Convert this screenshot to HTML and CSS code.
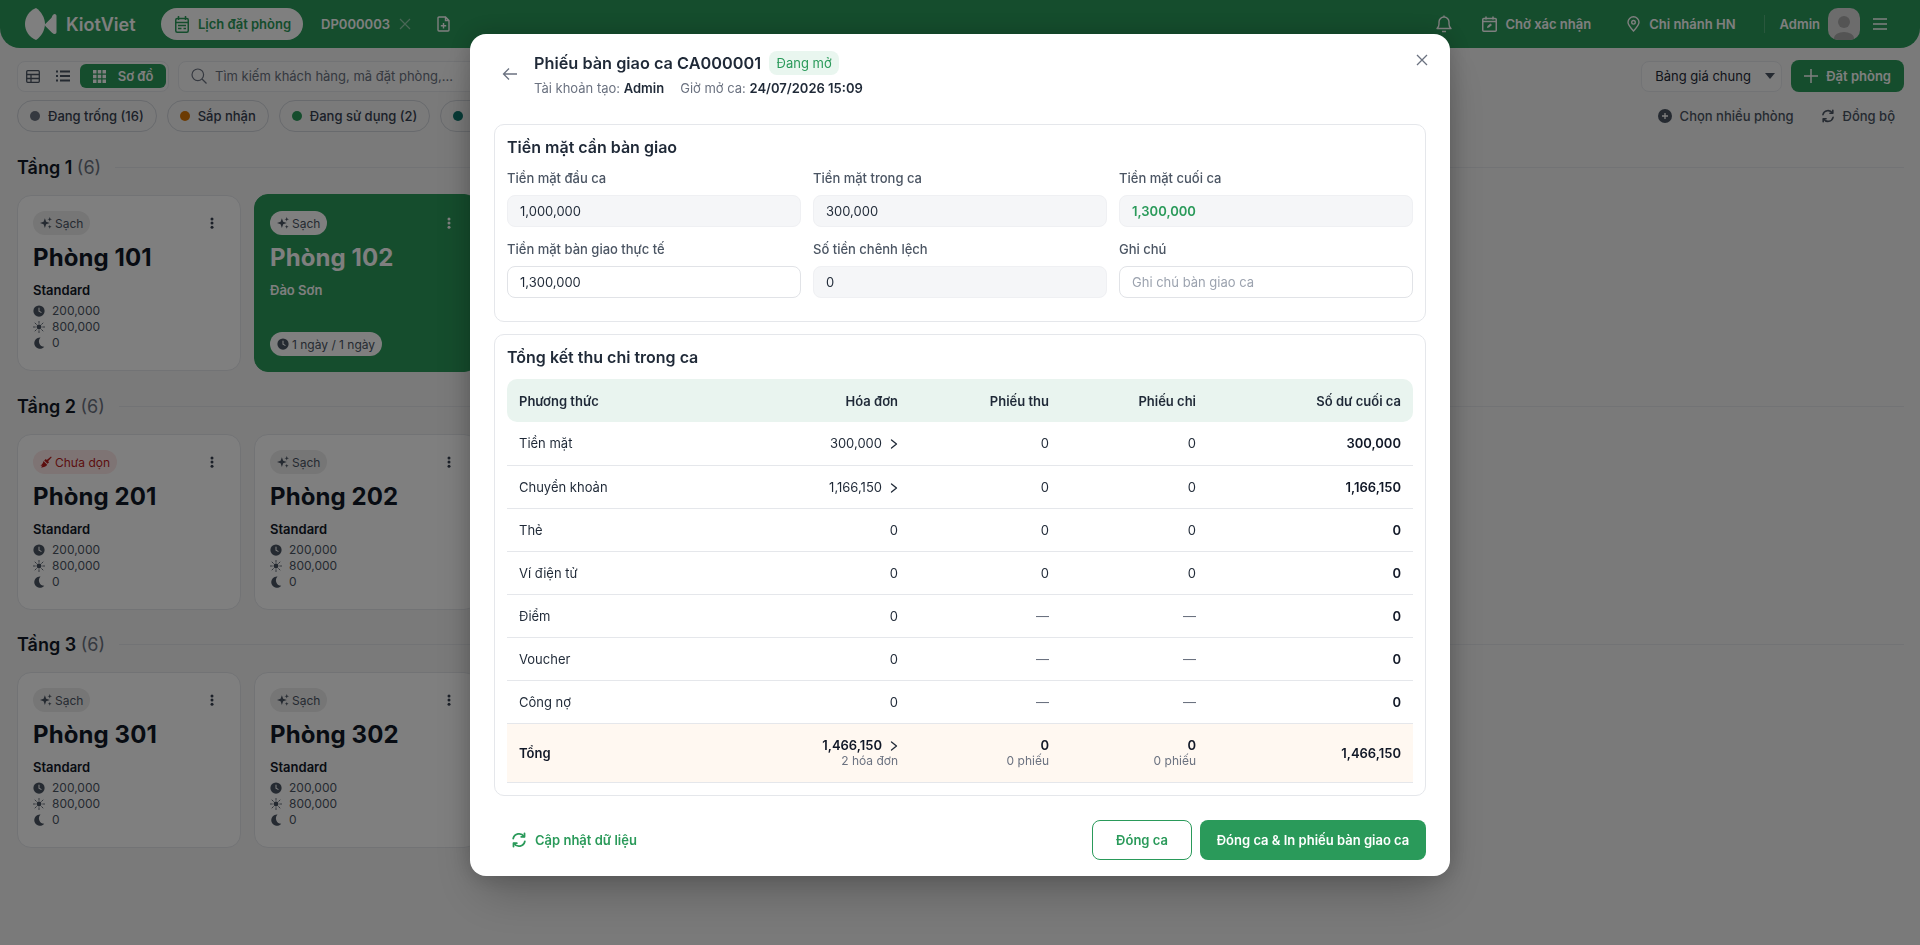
FILE: index.html
```html
<!DOCTYPE html>
<html lang="vi">
<head>
    <meta charset="UTF-8">
    <meta name="viewport" content="width=device-width, initial-scale=1.0">
    <title>Phiếu bàn giao ca</title>
    <link rel="stylesheet" href="styles.css">
</head>
<body>

    <!-- Shared icons -->
    <svg class="sprite" aria-hidden="true">
        <symbol id="i-spark" viewBox="0 0 16 16"><path fill="currentColor" d="M6.500 1.500l1.700 4.800L13 8 8.200 9.700 6.500 14.500 4.800 9.700 0 8l4.800-1.700zM13 0l.8 2.200 2.200.8-2.200.8L13 6l-.8-2.200L10 3l2.200-.8zM13 10.500l.7 1.800 1.800.7-1.800.7L13 15.500l-.7-1.800-1.800-.7 1.800-.7z"/></symbol>
        <symbol id="i-dots" viewBox="0 0 16 16"><g fill="currentColor"><circle cx="8" cy="2.500" r="2"/><circle cx="8" cy="8" r="2"/><circle cx="8" cy="13.500" r="2"/></g></symbol>
        <symbol id="i-clock" viewBox="0 0 16 16"><circle cx="8" cy="8" r="7.500" fill="currentColor"/><path d="M8 4v4.300l2.800 1.500" fill="none" stroke="#fff" stroke-width="1.400" stroke-linecap="round"/></symbol>
        <symbol id="i-sun" viewBox="0 0 16 16"><circle cx="8" cy="8" r="3.200" fill="currentColor"/><path d="M8 .5v2.500M8 13v2.500M.5 8H3M13 8h2.500M2.700 2.700l1.800 1.800M11.500 11.500l1.800 1.800M13.300 2.700l-1.800 1.800M4.500 11.500l-1.800 1.800" stroke="currentColor" stroke-width="1.100" stroke-linecap="round"/></symbol>
        <symbol id="i-moon" viewBox="0 0 16 16"><path fill="currentColor" d="M10 .8a7.500 7.500 0 1 0 5 12.200A7.200 7.200 0 0 1 10 .8z"/></symbol>
        <symbol id="i-sync" viewBox="0 0 16 16"><g fill="none" stroke="currentColor" stroke-width="1.800" stroke-linecap="round" stroke-linejoin="round"><path d="M2.200 6.500A6 6 0 0 1 13 4.500"/><path d="M13.800 9.500A6 6 0 0 1 3 11.500"/><path d="M13.500 1.500v3.300h-3.300"/><path d="M2.500 14.500v-3.300h3.300"/></g></symbol>
        <symbol id="i-chev" viewBox="0 0 8 12"><path d="M1.500 2l5 4-5 4" fill="none" stroke="currentColor" stroke-width="1.300" stroke-linecap="round" stroke-linejoin="round"/></symbol>
    </svg>

    <header class="topbar">
        <div class="brand">
            <svg class="brand-logo" viewBox="0 0 32 32"><path fill="currentColor" d="M11 0c5 3 9 10 9 16s-4 13-9 16C4 29 0 23 0 16S4 3 11 0z"/><path fill="currentColor" d="M29.500 6c1.500 0 2 1 2 2v16c0 1-.5 2-2 2-.8 0-1.800-.6-3-1.800l-6-6c-.8-.8-.8-1.600 0-2.400l6-6C27.700 6.600 28.700 6 29.500 6z"/></svg>
            <span>KiotViet</span>
        </div>
        <a class="tab tab-active">
            <svg width="14" height="17" viewBox="0 0 14 17" fill="none" stroke="currentColor" stroke-width="1.500"><rect x=".75" y="2.500" width="12.500" height="13.700" rx="1.500"/><path d="M3.500 0v4M10.500 0v4M.75 6.500h12.500M3 9.500h8M3 12.500h3.500M8.500 12.500H11"/></svg>
            Lịch đặt phòng
        </a>
        <a class="tab">DP000003</a>
        <svg class="tab-close" width="12" height="12" viewBox="0 0 12 12" stroke="currentColor" stroke-width="1.200"><path d="M1 1l10 10M11 1L1 11"/></svg>
        <svg class="tab-new" width="13" height="16" viewBox="0 0 13 16" fill="none" stroke="currentColor" stroke-width="1.400"><path d="M1 2a1 1 0 0 1 1-1h6.500L12 4.500V14a1 1 0 0 1-1 1H2a1 1 0 0 1-1-1zM8.500 1v3.500H12M6.500 7v5.500M3.800 9.700h5.400"/></svg>

        <div class="topbar-right">
            <svg class="bell" width="16" height="18" viewBox="0 0 16 18" fill="none" stroke="currentColor" stroke-width="1.400" stroke-linejoin="round"><path d="M1 13.500c1.300-1 2-2.200 2-4.500V7a5 5 0 0 1 10 0v2c0 2.300.7 3.500 2 4.500zM6 16.500h4M8 .5v1.500"/></svg>
            <a class="top-link">
                <svg width="15" height="16" viewBox="0 0 15 16" fill="none" stroke="currentColor" stroke-width="1.500"><rect x=".75" y="2.500" width="13.500" height="12.700" rx="1"/><path d="M4 .5v3M11 .5v3M.75 5.500h13.500"/><path d="M5 12l.5-2 3-2.500 1.500 1.500-3 2.500z" fill="currentColor" stroke="none"/></svg>
                Chờ xác nhận
            </a>
            <a class="top-link">
                <svg width="13" height="16" viewBox="0 0 13 16" fill="none" stroke="currentColor" stroke-width="1.400"><path d="M6.500 15C3.500 11.800 1 9 1 6.300a5.500 5.500 0 0 1 11 0C12 9 9.500 11.800 6.500 15z"/><circle cx="6.500" cy="6.300" r="1.800"/></svg>
                Chi nhánh HN
            </a>
            <span class="top-divider"></span>
            <span class="admin">Admin</span>
            <span class="avatar"><svg width="32" height="32" viewBox="0 0 32 32" fill="#a8a8a8"><circle cx="16" cy="14" r="6"/><ellipse cx="16" cy="30" rx="10" ry="6"/></svg></span>
            <svg class="menu" width="14" height="12" viewBox="0 0 14 12" stroke="currentColor" stroke-width="1.300"><path d="M0 1h14M0 6h14M0 11h14"/></svg>
        </div>
    </header>

    <main class="page">
        <div class="toolbar">
            <div class="view-toggle">
                <button class="view-btn"><svg width="14" height="13" viewBox="0 0 14 13" fill="none" stroke="currentColor" stroke-width="1.300"><rect x=".7" y=".7" width="12.600" height="11.600" rx="1"/><path d="M.7 4.500h12.600M.7 8.500h12.600M5 4.500v8"/></svg></button>
                <button class="view-btn"><svg width="14" height="12" viewBox="0 0 14 12" stroke="currentColor" stroke-width="2"><path d="M4 1.500h10M4 6h10M4 10.500h10M0 1.500h2M0 6h2M0 10.500h2"/></svg></button>
                <button class="view-btn view-on"><svg width="13" height="13" viewBox="0 0 13 13" fill="currentColor"><path d="M0 0h3.500v3.500H0zM4.750 0h3.500v3.500h-3.500zM9.500 0H13v3.500H9.500zM0 4.750h3.500v3.500H0zM4.750 4.750h3.500v3.500h-3.500zM9.500 4.750H13v3.500H9.500zM0 9.500h3.500V13H0zM4.750 9.500h3.500V13h-3.500zM9.500 9.500H13V13H9.500z"/></svg>Sơ đồ</button>
            </div>
            <div class="search">
                <svg width="16" height="16" viewBox="0 0 16 16" fill="none" stroke="currentColor" stroke-width="1.200"><circle cx="6.800" cy="6.800" r="5.800"/><path d="M11 11l4.500 4.500"/></svg>
                <span>Tìm kiếm khách hàng, mã đặt phòng,...</span>
            </div>
            <div class="toolbar-right">
                <div class="price-select">Bảng giá chung<i class="caret"></i></div>
                <button class="btn-book"><svg width="14" height="14" viewBox="0 0 14 14" stroke="currentColor" stroke-width="1.500"><path d="M7 0v14M0 7h14"/></svg>Đặt phòng</button>
            </div>
        </div>

        <div class="filters">
            <span class="chip"><i class="dot dot-grey"></i>Đang trống (16)</span>
            <span class="chip"><i class="dot dot-orange"></i>Sắp nhận</span>
            <span class="chip"><i class="dot dot-green"></i>Đang sử dụng (2)</span>
            <span class="chip"><i class="dot dot-teal"></i>Sắp trả</span>
            <div class="filter-actions">
                <a class="action"><svg width="14" height="14" viewBox="0 0 14 14"><circle cx="7" cy="7" r="7" fill="currentColor"/><path d="M7 4v6M4 7h6" stroke="#fff" stroke-width="1.300"/></svg>Chọn nhiều phòng</a>
                <a class="action"><svg width="14" height="14"><use href="#i-sync"/></svg>Đồng bộ</a>
            </div>
        </div>

        <section class="floor">
            <h2 class="floor-title"><span>Tầng 1 <em>(6)</em></span></h2>
            <div class="rooms">
                <article class="room">
                    <div class="room-top"><span class="status"><svg width="12" height="12"><use href="#i-spark"/></svg>Sạch</span><svg class="room-menu" width="12" height="12"><use href="#i-dots"/></svg></div>
                    <h3>Phòng 101</h3>
                    <div class="room-type">Standard</div>
                    <ul class="prices">
                        <li><svg width="12" height="12"><use href="#i-clock"/></svg>200,000</li>
                        <li><svg width="12" height="12"><use href="#i-sun"/></svg>800,000</li>
                        <li><svg width="12" height="12"><use href="#i-moon"/></svg>0</li>
                    </ul>
                </article>
                <article class="room room-busy">
                    <div class="room-top"><span class="status"><svg width="12" height="12"><use href="#i-spark"/></svg>Sạch</span><svg class="room-menu" width="12" height="12"><use href="#i-dots"/></svg></div>
                    <h3>Phòng 102</h3>
                    <div class="room-type">Đào Sơn</div>
                    <span class="stay"><svg width="12" height="12"><use href="#i-clock"/></svg>1 ngày / 1 ngày</span>
                </article>
            </div>
        </section>

        <section class="floor">
            <h2 class="floor-title"><span>Tầng 2 <em>(6)</em></span></h2>
            <div class="rooms">
                <article class="room">
                    <div class="room-top"><span class="status status-dirty"><svg width="12" height="12" viewBox="0 0 12 12" fill="currentColor"><path d="M11 .5l.7.7-3.600 4 1 1-1.600 1.500L4.200 4.400 5.800 3l1 1zM3.500 5l3.700 3.700C6 10.500 4 11.500 1 11.500l1.500-2-2 .5C2 8.500 3 7 3.500 5z"/></svg>Chưa dọn</span><svg class="room-menu" width="12" height="12"><use href="#i-dots"/></svg></div>
                    <h3>Phòng 201</h3>
                    <div class="room-type">Standard</div>
                    <ul class="prices">
                        <li><svg width="12" height="12"><use href="#i-clock"/></svg>200,000</li>
                        <li><svg width="12" height="12"><use href="#i-sun"/></svg>800,000</li>
                        <li><svg width="12" height="12"><use href="#i-moon"/></svg>0</li>
                    </ul>
                </article>
                <article class="room">
                    <div class="room-top"><span class="status"><svg width="12" height="12"><use href="#i-spark"/></svg>Sạch</span><svg class="room-menu" width="12" height="12"><use href="#i-dots"/></svg></div>
                    <h3>Phòng 202</h3>
                    <div class="room-type">Standard</div>
                    <ul class="prices">
                        <li><svg width="12" height="12"><use href="#i-clock"/></svg>200,000</li>
                        <li><svg width="12" height="12"><use href="#i-sun"/></svg>800,000</li>
                        <li><svg width="12" height="12"><use href="#i-moon"/></svg>0</li>
                    </ul>
                </article>
            </div>
        </section>

        <section class="floor">
            <h2 class="floor-title"><span>Tầng 3 <em>(6)</em></span></h2>
            <div class="rooms">
                <article class="room">
                    <div class="room-top"><span class="status"><svg width="12" height="12"><use href="#i-spark"/></svg>Sạch</span><svg class="room-menu" width="12" height="12"><use href="#i-dots"/></svg></div>
                    <h3>Phòng 301</h3>
                    <div class="room-type">Standard</div>
                    <ul class="prices">
                        <li><svg width="12" height="12"><use href="#i-clock"/></svg>200,000</li>
                        <li><svg width="12" height="12"><use href="#i-sun"/></svg>800,000</li>
                        <li><svg width="12" height="12"><use href="#i-moon"/></svg>0</li>
                    </ul>
                </article>
                <article class="room">
                    <div class="room-top"><span class="status"><svg width="12" height="12"><use href="#i-spark"/></svg>Sạch</span><svg class="room-menu" width="12" height="12"><use href="#i-dots"/></svg></div>
                    <h3>Phòng 302</h3>
                    <div class="room-type">Standard</div>
                    <ul class="prices">
                        <li><svg width="12" height="12"><use href="#i-clock"/></svg>200,000</li>
                        <li><svg width="12" height="12"><use href="#i-sun"/></svg>800,000</li>
                        <li><svg width="12" height="12"><use href="#i-moon"/></svg>0</li>
                    </ul>
                </article>
            </div>
        </section>
    </main>

    <!-- Shift handover modal -->
    <div class="overlay">
        <div class="modal">
            <button class="modal-close"><svg width="12" height="12" viewBox="0 0 12 12" stroke="currentColor" stroke-width="1.300"><path d="M1 1l10 10M11 1L1 11"/></svg></button>

            <div class="modal-head">
                <svg class="back" width="16" height="14" viewBox="0 0 16 14" fill="none" stroke="currentColor" stroke-width="1.300"><path d="M15 7H1.500M7 1.500L1.500 7 7 12.500"/></svg>
                <div>
                    <div class="modal-title">
                        <h1>Phiếu bàn giao ca CA000001</h1>
                        <span class="badge-open">Đang mở</span>
                    </div>
                    <p class="modal-meta">
                        <span>Tài khoản tạo: <b>Admin</b></span>
                        <span>Giờ mở ca: <b>24/07/2026 15:09</b></span>
                    </p>
                </div>
            </div>

            <section class="panel panel-cash">
                <h2>Tiền mặt cần bàn giao</h2>
                <div class="cash-grid">
                    <div class="field">
                        <label for="cash-start">Tiền mặt đầu ca</label>
                        <input id="cash-start" class="readonly" value="1,000,000" readonly>
                    </div>
                    <div class="field">
                        <label for="cash-shift">Tiền mặt trong ca</label>
                        <input id="cash-shift" class="readonly" value="300,000" readonly>
                    </div>
                    <div class="field">
                        <label for="cash-end">Tiền mặt cuối ca</label>
                        <input id="cash-end" class="readonly strong-green" value="1,300,000" readonly>
                    </div>
                    <div class="field">
                        <label for="cash-real">Tiền mặt bàn giao thực tế</label>
                        <input id="cash-real" value="1,300,000">
                    </div>
                    <div class="field">
                        <label for="cash-diff">Số tiền chênh lệch</label>
                        <input id="cash-diff" class="readonly" value="0" readonly>
                    </div>
                    <div class="field">
                        <label for="cash-note">Ghi chú</label>
                        <input id="cash-note" placeholder="Ghi chú bàn giao ca">
                    </div>
                </div>
            </section>

            <section class="panel panel-summary">
                <h2>Tổng kết thu chi trong ca</h2>
                <table class="summary">
                    <thead>
                        <tr><th>Phương thức</th><th>Hóa đơn</th><th>Phiếu thu</th><th>Phiếu chi</th><th>Số dư cuối ca</th></tr>
                    </thead>
                    <tbody>
                        <tr><td>Tiền mặt</td><td>300,000<svg class="chev" width="8" height="12"><use href="#i-chev"/></svg></td><td>0</td><td>0</td><td>300,000</td></tr>
                        <tr><td>Chuyển khoản</td><td>1,166,150<svg class="chev" width="8" height="12"><use href="#i-chev"/></svg></td><td>0</td><td>0</td><td>1,166,150</td></tr>
                        <tr><td>Thẻ</td><td>0</td><td>0</td><td>0</td><td>0</td></tr>
                        <tr><td>Ví điện tử</td><td>0</td><td>0</td><td>0</td><td>0</td></tr>
                        <tr><td>Điểm</td><td>0</td><td class="dash">—</td><td class="dash">—</td><td>0</td></tr>
                        <tr><td>Voucher</td><td>0</td><td class="dash">—</td><td class="dash">—</td><td>0</td></tr>
                        <tr><td>Công nợ</td><td>0</td><td class="dash">—</td><td class="dash">—</td><td>0</td></tr>
                        <tr class="total">
                            <td>Tổng</td>
                            <td>1,466,150<svg class="chev" width="8" height="12"><use href="#i-chev"/></svg><small>2 hóa đơn</small></td>
                            <td>0<small>0 phiếu</small></td>
                            <td>0<small>0 phiếu</small></td>
                            <td>1,466,150</td>
                        </tr>
                    </tbody>
                </table>
            </section>

            <div class="modal-foot">
                <button class="btn-refresh"><svg width="16" height="16"><use href="#i-sync"/></svg>Cập nhật dữ liệu</button>
                <div class="foot-right">
                    <button class="btn-outline">Đóng ca</button>
                    <button class="btn-primary">Đóng ca &amp; In phiếu bàn giao ca</button>
                </div>
            </div>
        </div>
    </div>

</body>
</html>
```

FILE: styles.css
```css
* {
    box-sizing: border-box;
}
body {
    margin: 0;
    height: 945px;
    overflow: hidden;
    font-family: Inter, "Noto Sans", sans-serif;
    font-size: 13px;
    color: #111827;
    background-color: #f4f4f4;
}
h1, h2, h3, p, ul {
    margin: 0;
    padding: 0;
}
ul {
    list-style: none;
}
button {
    font-family: inherit;
    border: none;
    cursor: pointer;
}
.sprite {
    display: none;
}

/* Top bar */
.topbar {
    display: flex;
    align-items: center;
    height: 48px;
    padding: 0 33px 0 25px;
    background-color: #2a9a5a;
    border-radius: 0 0 20px 20px;
    color: #fff;
}
.brand {
    display: flex;
    align-items: center;
    gap: 9px;
    width: 136px;
    font-size: 18px;
    font-weight: 600;
}
.brand-logo {
    width: 32px;
    height: 32px;
}
.tab {
    display: flex;
    align-items: center;
    gap: 9px;
    font-size: 13px;
    font-weight: 600;
}
.tab-active {
    height: 32px;
    padding: 0 12px 0 14px;
    margin-right: 18px;
    border-radius: 16px;
    background-color: #fff;
    color: #2a9a5a;
}
.tab-close {
    margin-left: 9px;
    opacity: 0.5;
}
.tab-new {
    margin-left: 26px;
}
.topbar-right {
    display: flex;
    align-items: center;
    margin-left: auto;
}
.bell {
    margin-right: 30px;
}
.top-link {
    display: flex;
    align-items: center;
    gap: 9px;
    margin-right: 36px;
    font-weight: 600;
}
.top-link:nth-of-type(1) {
    gap: 8px;
}
.top-link:nth-of-type(2) {
    margin-right: 28px;
}
.top-divider {
    width: 1px;
    height: 18px;
    margin-right: 15px;
    background-color: rgba(255, 255, 255, 0.2);
}
.admin {
    font-weight: 600;
    margin-right: 8px;
}
.avatar {
    display: block;
    width: 32px;
    height: 32px;
    border-radius: 10px;
    overflow: hidden;
    background-color: #d9d9d9;
    margin-right: 13px;
}
.avatar svg {
    display: block;
}

/* Page */
.page {
    padding: 12px 16px 0 17px;
}
.toolbar {
    display: flex;
    align-items: center;
    height: 32px;
}
.view-toggle {
    display: flex;
    align-items: center;
    width: 152px;
    height: 31px;
    padding: 0 2px 0 0;
    background-color: #f9f9f9;
    border: 1px solid #e5e7eb;
    border-radius: 8px;
}
.view-btn {
    display: flex;
    align-items: center;
    justify-content: center;
    width: 30px;
    height: 24px;
    padding: 0;
    background: none;
    color: #4b5563;
}
.view-on {
    flex: 1;
    gap: 12px;
    margin-left: 2px;
    border-radius: 6px;
    background-color: #2a9a5a;
    color: #fff;
    font-size: 13px;
    font-weight: 600;
}
.search {
    display: flex;
    align-items: center;
    gap: 8px;
    width: 480px;
    height: 31px;
    margin-left: 9px;
    padding: 0 12px;
    background-color: #f9f9f9;
    border: 1px solid #e5e7eb;
    border-radius: 8px;
    color: #6b7280;
}
.toolbar-right {
    display: flex;
    align-items: center;
    gap: 9px;
    margin-left: auto;
}
.price-select {
    display: flex;
    align-items: center;
    justify-content: space-between;
    width: 141px;
    height: 31px;
    padding: 0 8px 0 13px;
    background-color: #f9f9f9;
    border: 1px solid #e5e7eb;
    border-radius: 8px;
    color: #1f2937;
}
.caret {
    width: 0;
    height: 0;
    margin-right: -2px;
    border-left: 5px solid transparent;
    border-right: 5px solid transparent;
    border-top: 6px solid #4b5563;
}
.btn-book {
    display: flex;
    align-items: center;
    gap: 8px;
    height: 32px;
    padding: 0 13px;
    border-radius: 8px;
    background-color: #2a9a5a;
    color: #fff;
    font-size: 13px;
    font-weight: 600;
}
.filters {
    display: flex;
    align-items: center;
    gap: 10px;
    height: 32px;
    margin-top: 8px;
}
.chip {
    display: flex;
    align-items: center;
    gap: 8px;
    height: 32px;
    padding: 0 12px;
    border: 1px solid #d1d5db;
    border-radius: 16px;
    color: #374151;
    font-weight: 500;
}
.dot {
    width: 10px;
    height: 10px;
    border-radius: 50%;
}
.dot-grey { background-color: #6b7280; }
.dot-orange { background-color: #d97706; }
.dot-green { background-color: #2a9a5a; }
.dot-teal { background-color: #0f766e; }
.filter-actions {
    display: flex;
    gap: 27px;
    margin-left: auto;
    padding-right: 9px;
}
.action {
    display: flex;
    align-items: center;
    gap: 8px;
    color: #4b5563;
    font-weight: 500;
}
.floor {
    margin-top: 22px;
}
.page .floor:first-of-type {
    margin-top: 23px;
}
.floor-title {
    display: flex;
    align-items: center;
    gap: 14px;
    height: 24px;
    font-size: 18px;
    font-weight: 600;
    color: #111827;
}
.floor-title::after {
    content: "";
    flex: 1;
    height: 1px;
    background-color: #e5e7eb;
}
.floor-title em {
    font-style: normal;
    font-weight: 400;
    color: #6b7280;
}
.rooms {
    display: flex;
    gap: 13px;
    margin-top: 16px;
}
.room {
    display: flex;
    flex-direction: column;
    width: 224px;
    height: 176px;
    padding: 16px 16px 0;
    background-color: #fff;
    border: 1px solid #e5e7eb;
    border-radius: 14px;
}
.room-top {
    display: flex;
    align-items: center;
    justify-content: space-between;
    height: 24px;
    margin-top: -1px;
    margin-left: -1px;
}
.status {
    display: flex;
    align-items: center;
    gap: 3px;
    height: 24px;
    padding: 0 7px;
    border-radius: 12px;
    background-color: #ececec;
    color: #4b5563;
    font-size: 12px;
}
.status-dirty {
    background-color: #fde8e8;
    color: #b91c1c;
}
.room-menu {
    margin-right: 6px;
    color: #374151;
}
.room h3 {
    margin: 7px 0 0 -1px;
    font-size: 24px;
    line-height: 32px;
    font-weight: 700;
    letter-spacing: 0.1px;
}
.room-type {
    margin: 8px 0 0 -1px;
    height: 16px;
    font-weight: 600;
    line-height: 16px;
}
.prices {
    margin: 5px 0 0 -1px;
    color: #4b5563;
    font-size: 12px;
}
.prices li {
    display: flex;
    align-items: center;
    gap: 7px;
    height: 16px;
    line-height: 16px;
}
.room-busy {
    height: 178px;
    margin-top: -1px;
    padding-top: 17px;
    background-color: #2a9a5a;
    border-color: #2a9a5a;
    color: #fff;
}
.room-busy .room-menu {
    color: #fff;
}
.room-busy .status,
.stay {
    background-color: #fff;
}
.stay {
    display: flex;
    align-items: center;
    gap: 3px;
    align-self: flex-start;
    height: 24px;
    margin: 34px 0 0 -1px;
    padding: 0 7px;
    border-radius: 12px;
    color: #4b5563;
    font-size: 12px;
}

/* Modal */
.overlay {
    position: fixed;
    inset: 0;
    display: flex;
    justify-content: center;
    align-items: flex-start;
    padding-top: 34px;
    background-color: rgba(0, 0, 0, 0.5);
}
.modal {
    position: relative;
    width: 980px;
    height: 842px;
    padding: 14px 24px 16px;
    background-color: #fff;
    border-radius: 16px;
    box-shadow: 0 25px 50px -12px rgba(0, 0, 0, 0.25), 0 0 24px rgba(0, 0, 0, 0.2);
}
.modal-close {
    position: absolute;
    top: 20px;
    right: 22px;
    display: flex;
    padding: 0;
    background: none;
    color: #6b7280;
}
.modal-head {
    display: flex;
    align-items: center;
    gap: 16px;
    height: 50px;
    padding-left: 8px;
    margin-bottom: 26px;
}
.back {
    margin-top: 1px;
    color: #6b7280;
}
.modal-title {
    display: flex;
    align-items: center;
    gap: 8px;
    height: 24px;
}
.modal-title h1 {
    font-size: 16.3px;
    font-weight: 600;
    color: #1f2937;
}
.badge-open {
    display: block;
    padding: 0 7.5px;
    line-height: 24px;
    border-radius: 8px;
    background-color: #e9f6ef;
    color: #2a9a5a;
    font-size: 13px;
    font-weight: 400;
}
.modal-meta {
    display: flex;
    gap: 16px;
    margin-top: 5px;
    font-size: 13px;
    line-height: 16px;
    color: #6b7280;
}
.modal-meta b {
    font-weight: 600;
    color: #1f2937;
}
.panel {
    padding: 11px 12px 12px;
    border: 1px solid #e5e7eb;
    border-radius: 10px;
}
.panel h2 {
    font-size: 16px;
    font-weight: 600;
    line-height: 22px;
    color: #1f2937;
}
.panel-cash {
    height: 198px;
    margin-bottom: 12px;
}
.cash-grid {
    display: grid;
    grid-template-columns: repeat(3, 1fr);
    gap: 14px 12px;
    margin-top: 12px;
}
.field label {
    display: block;
    margin-bottom: 9px;
    line-height: 16px;
    font-weight: 500;
    color: #4b5563;
}
.field input {
    display: block;
    width: 100%;
    height: 32px;
    padding: 0 12px;
    border: 1px solid #e1e3e7;
    border-radius: 8px;
    font-family: inherit;
    font-size: 13px;
    color: #1f2937;
    outline: none;
}
.field input::placeholder {
    color: #9ca3af;
}
.field .readonly {
    background-color: #f5f6f8;
    border-color: #eff0f3;
}
.field .strong-green {
    color: #2a9a5a;
    font-weight: 600;
}
.panel-summary {
    height: 462px;
}
.summary {
    width: 100%;
    margin-top: 11px;
    border-collapse: collapse;
    table-layout: fixed;
}
.summary th,
.summary td {
    padding: 0 12px;
    text-align: right;
    line-height: 16px;
}
.summary th:first-child,
.summary td:first-child {
    text-align: left;
}
.summary th {
    height: 43px;
    font-weight: 600;
    color: #1f2937;
    background-color: #e9f4ef;
}
.summary th:nth-child(1) { width: 253px; border-radius: 10px 0 0 10px; }
.summary th:nth-child(2) { width: 150px; }
.summary th:nth-child(3) { width: 151px; }
.summary th:nth-child(4) { width: 147px; }
.summary th:nth-child(5) { width: 205px; border-radius: 0 10px 10px 0; }
.summary td {
    height: 43px;
    color: #1f2937;
    border-bottom: 1px solid #e5e7eb;
}
.summary td:last-child {
    font-weight: 600;
    color: #111827;
}
.chev {
    margin-left: 8px;
    vertical-align: -2px;
    color: #1f2937;
}
.summary .dash {
    color: #6b7280;
}
.summary .total td {
    height: 59px;
    background-color: #fff8f1;
    font-weight: 600;
    color: #111827;
}
.total small {
    display: block;
    font-size: 12px;
    font-weight: 400;
    color: #6b7280;
}
.modal-foot {
    display: flex;
    align-items: center;
    justify-content: space-between;
    margin-top: 24px;
}
.btn-refresh {
    display: flex;
    align-items: center;
    gap: 8px;
    padding: 0 0 0 17px;
    background: none;
    color: #2a9a5a;
    font-size: 13px;
    font-weight: 600;
}
.foot-right {
    display: flex;
    gap: 8px;
}
.btn-outline,
.btn-primary {
    height: 40px;
    border-radius: 8px;
    font-size: 13px;
    font-weight: 600;
}
.btn-outline {
    width: 100px;
    background-color: #fff;
    border: 1px solid #2a9a5a;
    color: #2a9a5a;
}
.btn-primary {
    width: 226px;
    background-color: #2a9a5a;
    color: #fff;
}
```
